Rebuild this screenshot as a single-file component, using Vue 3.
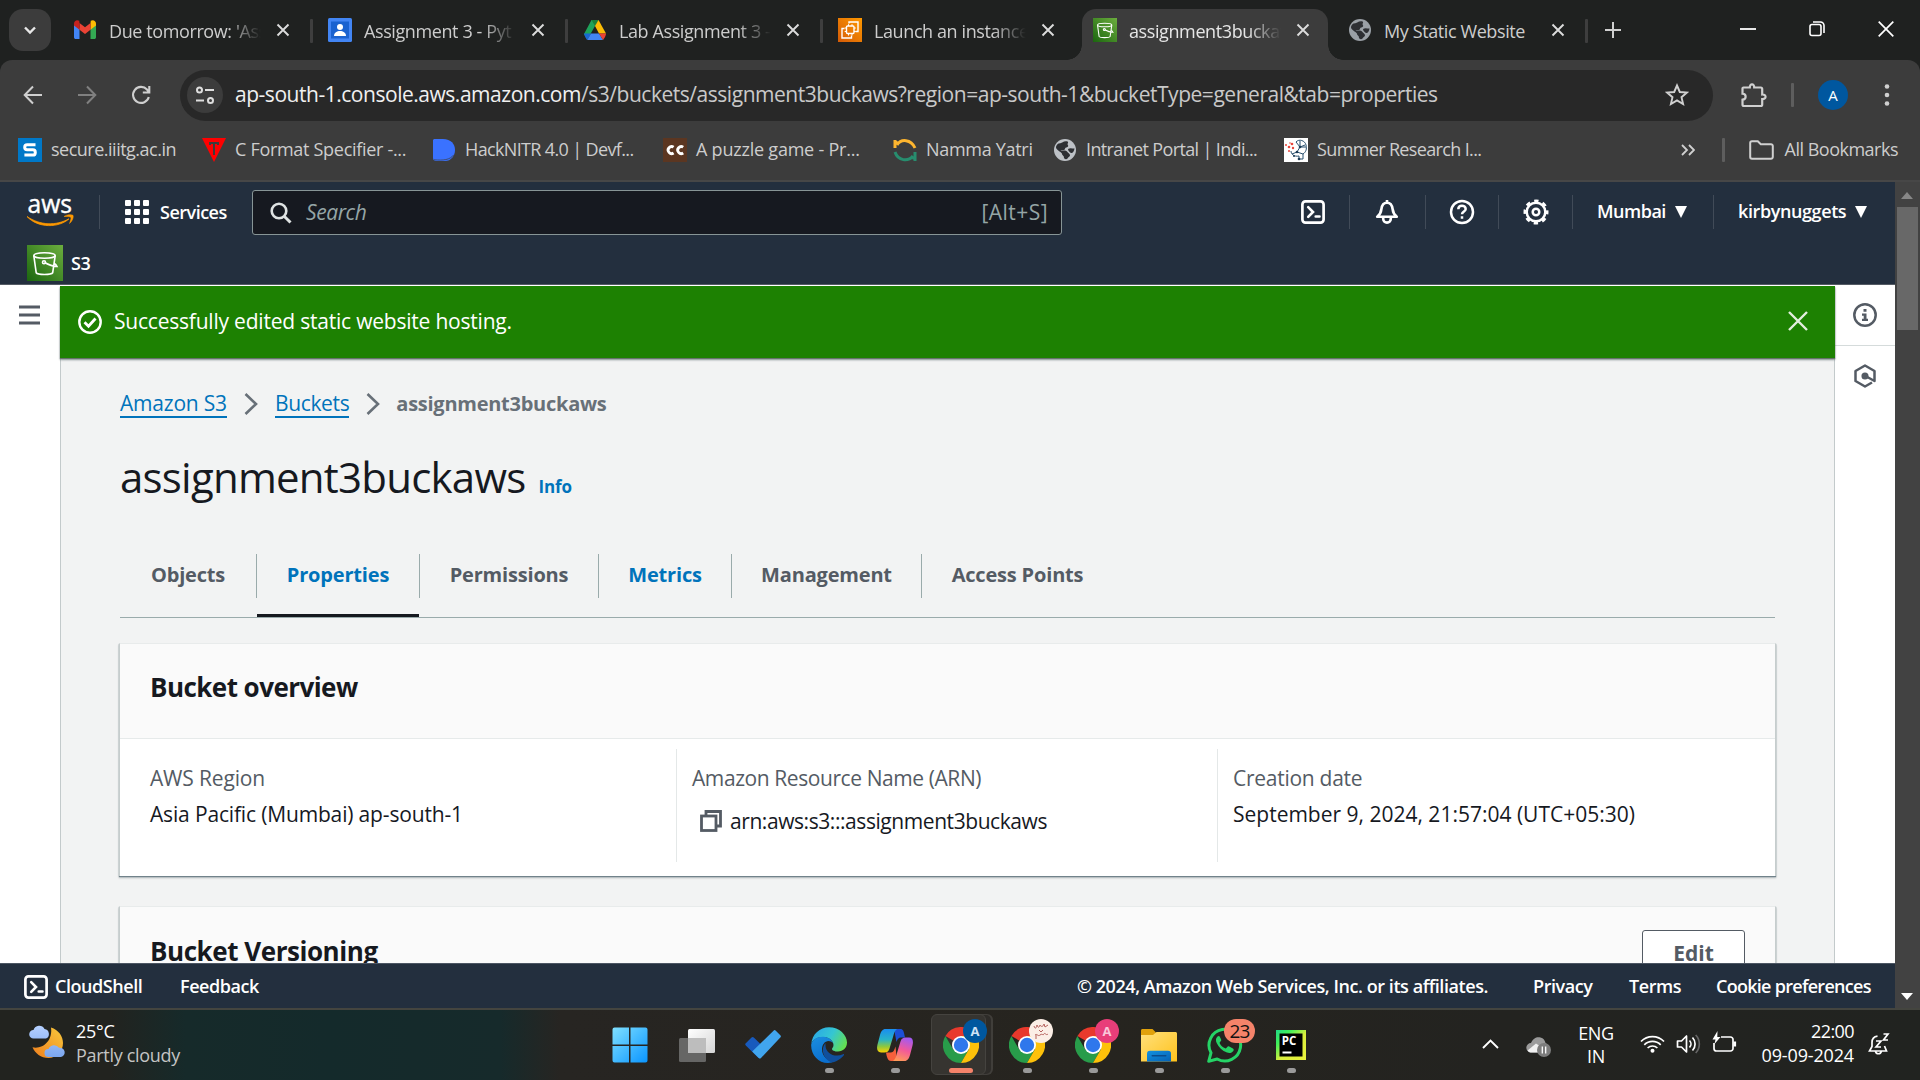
<script setup>
const tabs = [
  { icon: 'gmail', title: "Due tomorrow: 'Ass" },
  { icon: 'classroom', title: 'Assignment 3 - Pyt' },
  { icon: 'drive', title: 'Lab Assignment 3 -' },
  { icon: 'ec2', title: 'Launch an instance' },
  { icon: 's3', title: 'assignment3buckaw', active: true },
  { icon: 'globe', title: 'My Static Website', full: true },
]
const bookmarks = [
  { icon: 'secure', title: 'secure.iiitg.ac.in', width: 184 },
  { icon: 'format', title: 'C Format Specifier -...', width: 230, cls: 'mid' },
  { icon: 'hack', title: 'HackNITR 4.0 | Devf...', width: 231, cls: 'tight' },
  { icon: 'cc', title: 'A puzzle game - Pr...', width: 230, cls: 'wide' },
  { icon: 'namma', title: 'Namma Yatri', width: 160, cls: 'mid' },
  { icon: 'globe', title: 'Intranet Portal | Indi...', width: 231, cls: 'tight' },
  { icon: 'brain', title: 'Summer Research I...', width: 220, cls: 'tight' },
]
const sections = [
  { name: 'Objects', width: 137 },
  { name: 'Properties', width: 163, link: true, active: true },
  { name: 'Permissions', width: 179 },
  { name: 'Metrics', width: 133, link: true },
  { name: 'Management', width: 190 },
  { name: 'Access Points', width: 191 },
]
const dockApps = [
  { icon: 'win' },
  { icon: 'view' },
  { icon: 'todo' },
  { icon: 'edge', open: true },
  { icon: 'copilot', open: true },
  { icon: 'chrome', badge: 'A', tone: 'blue', focused: true },
  { icon: 'chrome', tone: 'paper', open: true },
  { icon: 'chrome', badge: 'A', tone: 'pink', open: true },
  { icon: 'folder', open: true },
  { icon: 'whatsapp', badge: '23', tone: 'count', open: true },
  { icon: 'pycharm', open: true },
]
</script>

<template>
  <div class="screen">
    <svg class="defs" width="0" height="0">
      <defs>
        <linearGradient id="gOrange" x1="0" y1="1" x2="1" y2="0"><stop offset="0" stop-color="#d45b07" /><stop offset="1" stop-color="#ff9900" /></linearGradient>
        <linearGradient id="gGreen" x1="0" y1="1" x2="1" y2="0"><stop offset="0" stop-color="#1b660f" /><stop offset="1" stop-color="#6cae3e" /></linearGradient>
        <linearGradient id="gWin" x1="0" y1="0" x2="1" y2="1"><stop offset="0" stop-color="#7fe0ff" /><stop offset="1" stop-color="#0a95ff" /></linearGradient>
        <linearGradient id="gView" x1="0" y1="0" x2="1" y2="1"><stop offset="0" stop-color="#fff" /><stop offset="1" stop-color="#d5d5d5" /></linearGradient>
        <linearGradient id="gEdgeTop" x1="0" y1="0.3" x2="1" y2="0.7"><stop offset="0" stop-color="#2aa8e6" /><stop offset="0.5" stop-color="#35c6d2" /><stop offset="1" stop-color="#66e04a" /></linearGradient>
        <linearGradient id="gEdge" x1="0" y1="0" x2="0.4" y2="1"><stop offset="0" stop-color="#1b8fe0" /><stop offset="1" stop-color="#0b6fce" /></linearGradient>
        <linearGradient id="gCoA" x1="0" y1="0" x2="0" y2="1"><stop offset="0" stop-color="#1a8df0" /><stop offset="0.45" stop-color="#28b3c8" /><stop offset="0.75" stop-color="#8fc83c" /><stop offset="1" stop-color="#ffd000" /></linearGradient>
        <linearGradient id="gCoB" x1="0.6" y1="0" x2="0.3" y2="1"><stop offset="0" stop-color="#a45af0" /><stop offset="0.5" stop-color="#f2599a" /><stop offset="1" stop-color="#ff9a58" /></linearGradient>
        <linearGradient id="gFolder" x1="0" y1="0" x2="1" y2="1"><stop offset="0" stop-color="#ffe07c" /><stop offset="1" stop-color="#ffc21c" /></linearGradient>
        <linearGradient id="gBlue" x1="0" y1="0" x2="1" y2="1"><stop offset="0" stop-color="#1492e0" /><stop offset="1" stop-color="#0461b4" /></linearGradient>
        <linearGradient id="gPy" x1="0" y1="0" x2="1" y2="1"><stop offset="0" stop-color="#21d789" /><stop offset="0.25" stop-color="#3ff05a" /><stop offset="0.55" stop-color="#d9ee3c" /><stop offset="1" stop-color="#e9f23c" /></linearGradient>
        <linearGradient id="gMoon" x1="1" y1="0" x2="0" y2="1"><stop offset="0" stop-color="#f8c83c" /><stop offset="1" stop-color="#ee7e1e" /></linearGradient>
        <linearGradient id="gCloud" x1="0" y1="0" x2="0" y2="1"><stop offset="0" stop-color="#b5d0ff" /><stop offset="1" stop-color="#7ba6ee" /></linearGradient>

        <symbol id="i-gmail" viewBox="0 0 24 24">
          <path d="M1 6v13.2c0 1 .8 1.800 1.800 1.800H6.500V10z" fill="#4285f4" /><path d="M17.500 21h3.700c1 0 1.800-.8 1.800-1.800V6l-5.500 4z" fill="#34a853" />
          <path d="M17.500 5v6.800L23 7.600V5.400c0-2.700-3.100-4.200-5.200-2.600z" fill="#fbbc04" /><path d="M6.500 11.800V5l5.500 4.200L17.500 5v6.800L12 16z" fill="#ea4335" /><path d="M1 5.400v2.200l5.500 4.200V5L6.200 2.800C4 1.200 1 2.700 1 5.400z" fill="#c5221f" />
        </symbol>
        <symbol id="i-classroom" viewBox="0 0 24 24">
          <rect width="24" height="24" rx="1.500" fill="#4285f4" /><rect x="3" y="3.500" width="18" height="17" fill="#1a62d0" /><circle cx="12" cy="9" r="3" fill="#fff" /><path d="M6 18c0-3.500 3-5 6-5s6 1.500 6 5z" fill="#fff" />
        </symbol>
        <symbol id="i-drive" viewBox="0 0 24 24">
          <path d="M8.500 2h7L12 8 5.500 19.500 3.500 20.500 1 16z" fill="#1ea35a" /><path d="M8.500 2h7L12 8z" fill="#188038" /><path d="M15.500 2 23 15.500h-7L12 8z" fill="#fbbc04" />
          <path d="M1 15.500h7l-3.800 6.500C3.500 21.500 1 17 1 15.500z" fill="#1967d2" /><path d="M8 15.500h8l4 6.500H4.200z" fill="#4285f4" /><path d="M16 15.500h7c0 2-2 5.500-3 6.500z" fill="#ea4335" />
        </symbol>
        <symbol id="i-ec2" viewBox="0 0 24 24">
          <rect width="24" height="24" fill="url(#gOrange)" /><g fill="none" stroke="#fff" stroke-width="1.400"><path d="M11 5.500V4h9v9.500h-2.500M6.500 10.500H4V20h9.500v-2.500" /><rect x="8.500" y="8" width="7.500" height="7.500" rx="1" /><path d="M10.500 6.200V8M14 6.200V8M10.500 15.500v2M14 15.500v2M6.700 10h1.800M6.700 13.500h1.800M16 10h1.800M16 13.500h1.800" stroke-width="1" /></g>
        </symbol>
        <symbol id="i-s3" viewBox="0 0 36 36">
          <rect width="36" height="36" fill="url(#gGreen)" /><g fill="none" stroke="#fff" stroke-width="1.600"><ellipse cx="17.500" cy="10.500" rx="10.700" ry="2.700" /><path d="M6.800 10.700l2.400 17c1.500 2.300 15 2.300 16.500 0l2.500-17M17.500 17.500c4 2.200 8 3.800 12.500 4-.6-1.500-1.500-2.500-3-3.300" /><circle cx="17" cy="17.300" r="1.500" /></g>
        </symbol>
        <symbol id="i-globe" viewBox="0 0 24 24">
          <circle cx="12" cy="12" r="11" fill="currentColor" /><path d="M5.500 5.500c3 0 6-3.500 9-2 1.500.8-.5 2.300.3 3.400 1.200 1.300-.5 2.300-1.800 2.700-1.500.4-.5 2.200-2 2.400H7.500c2 1.200 5-.5 6.500 1.500 1.200 1.500 2.500 2 3 3.500.3 1.500-1.800 2-2.500 3.400-1 1.600-4 .6-3.600-1.400.2-1.400-2-1.500-2-3.500C7.500 13.500 3.500 12 3 9.500c0-1.600 1-3.100 2.500-4z" fill="#2d2f33" />
          <path d="M15 11c2-1.500 4-.5 6.500-.5-.3 3-2 5-3.500 4.500-1.500-.6-3-2.500-3-4z" fill="#2d2f33" />
        </symbol>
        <symbol id="i-secure" viewBox="0 0 24 24"><rect width="24" height="24" fill="#0078c8" /><path d="M17.500 6.800H9.200C7.500 6.800 6.700 8 6.700 9.300s.8 2.500 2.500 2.500h5.600c1.700 0 2.500 1.200 2.500 2.600s-.8 2.700-2.500 2.700H6.400" fill="none" stroke="#fff" stroke-width="3" /></symbol>
        <symbol id="i-format" viewBox="0 0 24 24"><path d="M0 0h24L12 24z" fill="#f00" /><path d="M7 5h10M12 5v12M8 5v2M16 5v2" stroke="#3c3c3c" stroke-width="2" fill="none" /></symbol>
        <symbol id="i-hack" viewBox="0 0 24 24"><path d="M2 1h9c8 0 12 5 12 11s-4 11-10 11H4c-1.500 0-3-1-3-3V2z" fill="#3a72ff" /><path d="M2 21.800c9 .8 16 .2 19.800-5" fill="none" stroke="#3c3c3c" stroke-width=".7" /></symbol>
        <symbol id="i-cc" viewBox="0 0 24 24"><rect width="24" height="24" fill="#5b3621" /><path d="M10.600 9.200A3.500 3.500 0 1 0 10.600 15M20.200 9.200a3.500 3.500 0 1 0 0 5.800" fill="none" stroke="#fff" stroke-width="2.800" /></symbol>
        <symbol id="i-namma" viewBox="0 0 24 24"><path d="M2 10V2M1.500 4.500h3M4 7c4-6.500 14-6 18 3" fill="none" stroke="#fdb52f" stroke-width="3" /><path d="M2 14c3 9 13 10 18 4M22 14v9M19.500 20h3" fill="none" stroke="#278d6e" stroke-width="3" /></symbol>
        <symbol id="i-brain" viewBox="0 0 24 24"><rect width="24" height="24" fill="#fff" /><path d="M12 4c3-3.500 9-1.500 10 3 1 4 0 7-3 9v5h-4v-3c-5 1-8-2-8-5M12 4l4 5 5-2M16 9l-3 5 6 2M13 14l-5 2M16 3v6h6" fill="none" stroke="#29506e" stroke-width="1" /><g fill="#e8463c"><circle cx="2" cy="7" r="1" /><circle cx="5" cy="9" r="1.300" /><circle cx="8" cy="6" r="1.300" /><circle cx="9" cy="10" r="1.200" /><circle cx="5" cy="13" r="1" /><circle cx="6" cy="5" r=".8" /></g><g fill="#1b3a55"><circle cx="16" cy="9" r="1.300" /><circle cx="13" cy="14" r="1.300" /><circle cx="15" cy="21" r="1.300" /><circle cx="10" cy="18" r="1" /></g></symbol>

        <symbol id="i-shell" viewBox="0 0 24 24"><rect x="1.400" y="1.400" width="21.200" height="21.200" rx="3" fill="none" stroke="#fff" stroke-width="2.700" /><path d="M7.200 7.200 12 12l-4.800 4.800M14.700 16.500h3.800" fill="none" stroke="#fff" stroke-width="2.600" stroke-linecap="round" /></symbol>

        <symbol id="i-win" viewBox="0 0 36 36"><path d="M2.500.5H17v17H.5v-15a2 2 0 0 1 2-2zM18.500.5h15a2 2 0 0 1 2 2v15h-17zM.5 19H17v16.500H2.500a2 2 0 0 1-2-2zM18.500 19h17v14.500a2 2 0 0 1-2 2h-15z" fill="url(#gWin)" /></symbol>
        <symbol id="i-view" viewBox="0 0 36 36"><rect x="9" y="2" width="27" height="24" rx="1.500" fill="url(#gView)" /><rect x="0" y="11" width="27" height="24" rx="1.500" fill="#777" opacity=".8" /><rect x="9" y="11" width="18" height="15" fill="#bdbdbd" /></symbol>
        <symbol id="i-todo" viewBox="0 0 36 36"><path d="M.8 16.200 6.500 10.500c.8-.8 1.500-.8 2.300 0L20 21.500l-6.500 9.500L.8 18.400c-.8-.8-.8-1.400 0-2.200z" fill="#185abd" /><path d="M7.200 24.500 28.500 3.700c.8-.8 1.500-.8 2.300 0l4.500 4.600c.8.800.8 1.500 0 2.300L16 31c-.8.800-1.500.8-2.300 0z" fill="#41a5ee" /></symbol>
        <symbol id="i-edge" viewBox="0 0 36 36"><path d="M.3 17C1 7 9 .2 18 .2 28.500.2 36 8 36 15.500c0 5.500-4 9-9 9-3.500 0-6-1.300-6-2.600 0-1 1.500-1.700 1.500-4 0-4-4.500-8-10-8C6 10 1.500 12.500.3 17z" fill="url(#gEdgeTop)" /><path d="M.2 17.500C1.500 12.500 6 9.500 12.500 9.800c5 .4 8.500 3 9.500 6.200-1-1.200-2.500-2-4.500-2-3.500 0-6.500 3.500-6.500 8.500 0 6.500 5.500 11.500 12 11.500-1.500 1.200-3.500 2-6 2C7 36-.3 27.500.2 17.500z" fill="url(#gEdge)" /><path d="M14.500 16c-5 5-3 16 6 19.500 4.500-.5 9.500-3.500 12.500-7.500.3-.6-.3-1.200-1-.8-8 4-17.500-1-17.500-9z" fill="#104f9c" /></symbol>
        <symbol id="i-copilot" viewBox="0 0 36 36"><path d="M17 2h6c3 0 3.500 2 4 4l1 4.500h-4c-2.500 0-3.500 1.500-4.500 4.500z" fill="#1c4fd6" /><path d="M9 25.500h5c2.500 0 3.500-3 4.500-6L20 34h-6c-3 0-4-3-5-8.500z" fill="#f5603c" /><path d="M8.500 2H20c-2.500 1.500-3 4.500-4 8l-3.500 11.500c-1 3-2.500 4-5 4H4c-4 0-4.500-4-3.500-8L3 8c1-3.500 2.500-6 5.500-6z" fill="url(#gCoA)" /><path d="M27.500 34H16c2.500-1.500 3-4.500 4-8l3.500-11.500c1-3 2.500-4 5-4H32c4 0 4.500 4 3.500 8L33 28c-1 3.500-2.500 6-5.500 6z" fill="url(#gCoB)" /></symbol>
        <symbol id="i-chrome" viewBox="0 0 36 36"><path d="M18 18 2.400 9A18 18 0 0 1 33.600 9H18z" fill="#e8392c" /><path d="M2.400 9A18 18 0 0 0 18 36l7.800-13.500L10.200 22.500z" fill="#289c4a" /><path d="M33.600 9H18l7.800 13.500L18 36A18 18 0 0 0 33.600 9z" fill="#fdc10a" /><circle cx="18" cy="18" r="9" fill="#fff" /><circle cx="18" cy="18" r="7.200" fill="#2f77ec" /></symbol>
        <symbol id="i-folder" viewBox="0 0 36 36"><path d="M0 3.500C0 2.500.7 2 1.500 2h10l3.500 3.500V10H0z" fill="#e0a10c" /><path d="M0 8h12l3.500-3H34.500c.8 0 1.500.6 1.500 1.500v28H0z" fill="url(#gFolder)" /><path d="M6 34.500v-8c0-2 1.500-2.700 3-2.700h18c2 0 3 .9 3 2.700v8z" fill="url(#gBlue)" /><rect x="10.500" y="28" width="15" height="1.600" rx=".8" fill="#0a4c8c" /></symbol>
        <symbol id="i-whatsapp" viewBox="0 0 36 36"><path d="M1.700 34.300 4 25.800A15.800 15.800 0 1 1 10.200 32z" fill="#24231f" stroke="#25d366" stroke-width="3" stroke-linejoin="round" /><path d="M12.700 9.500c-.6-.8-1.500-.7-2.400.2-1.500 1.600-1.800 3.800-.6 6.300 2 4.200 5.500 7.800 10.300 9.500 2.800 1 5 .2 6.300-1.600.7-1 .5-2-.4-2.500l-3.700-1.900c-.8-.4-1.500-.1-2 .6-.8 1.200-1.400 1.700-2.600 1-2-1-3.700-2.700-4.800-4.700-.4-.8.200-1.500.9-2.200.6-.6.700-1.200.4-1.800z" fill="#25d366" /></symbol>
        <symbol id="i-pycharm" viewBox="0 0 36 36"><rect x="3" y="3" width="30" height="30" fill="url(#gPy)" /><rect x="6.500" y="6.500" width="23" height="23" fill="#000" /><rect x="9.500" y="24.500" width="9" height="2" fill="#fff" /><text x="8.800" y="18.300" fill="#fff" font-size="11.500" font-weight="700" font-family="Open Sans, sans-serif">PC</text></symbol>
      </defs>
    </svg>

    <header class="tabstrip">
      <button class="tab-search"><svg width="16" height="16" viewBox="0 0 16 16"><path d="M3 5.500 8 10.500 13 5.500" fill="none" stroke="#e8e8e8" stroke-width="2.400" /></svg></button>
      <div v-for="(t, i) in tabs" :key="i" class="tab" :class="{ active: t.active, ruled: i !== 3 && i !== 4 }">
        <svg class="fav" width="24" height="24"><use :href="'#i-' + t.icon" /></svg>
        <span class="tab-title" :class="{ faded: !t.full }">{{ t.title }}</span>
        <svg class="x" width="14" height="14" viewBox="0 0 14 14"><path d="M1.500 1.500l11 11M12.500 1.500l-11 11" stroke="#dcdcdc" stroke-width="1.900" /></svg>
      </div>
      <svg class="plus" width="16" height="16" viewBox="0 0 16 16"><path d="M8 0v16M0 8h16" stroke="#d0d0d0" stroke-width="2" /></svg>
      <div class="win-ctl">
        <svg width="16" height="16" viewBox="0 0 16 16"><path d="M0 8h16" stroke="#fff" stroke-width="1.800" /></svg>
        <svg width="16" height="16" viewBox="0 0 16 16"><rect x="1" y="3.500" width="11" height="11" rx="2" fill="none" stroke="#fff" stroke-width="1.600" /><path d="M4 1h7.500A3.500 3.500 0 0 1 15 4.500V12" fill="none" stroke="#fff" stroke-width="1.600" /></svg>
        <svg width="16" height="16" viewBox="0 0 16 16"><path d="M.7.7l14.600 14.600M15.300.7.7 15.300" stroke="#fff" stroke-width="1.700" /></svg>
      </div>
    </header>

    <div class="chrome-bars">
      <div class="toolbar">
        <svg class="nav" width="20" height="20" viewBox="0 0 20 20"><path d="M19 10H2M10 1.500 1.700 10l8.300 8.500" fill="none" stroke="#cfcfcf" stroke-width="2" /></svg>
        <svg class="nav" width="20" height="20" viewBox="0 0 20 20"><path d="M1 10h17M10 1.500l8.300 8.500-8.300 8.500" fill="none" stroke="#808080" stroke-width="2" /></svg>
        <svg class="nav" width="20" height="20" viewBox="0 0 20 20"><path d="M17.800 12A8 8 0 1 1 16 4.500L18 7M18.300 1v6.500h-6.500" fill="none" stroke="#cfcfcf" stroke-width="2.100" /></svg>
        <div class="omnibox">
          <span class="site"><svg width="20" height="20" viewBox="0 0 20 20"><g fill="none" stroke="#dedede" stroke-width="2"><circle cx="4.500" cy="5" r="2.500" /><path d="M10 5h9M1 15.500h8" /><circle cx="15.500" cy="15.500" r="2.500" /></g></svg></span>
          <span class="url"><b>ap-south-1.console.aws.amazon.com</b>/s3/buckets/assignment3buckaws?region=ap-south-1&amp;bucketType=general&amp;tab=properties</span>
          <svg class="star" width="24" height="24" viewBox="0 0 24 24"><path d="M12 2.500 14.800 9l7 .6-5.300 4.600 1.600 6.900L12 17.400l-6.100 3.700 1.600-6.900L2.200 9.600l7-.6z" fill="none" stroke="#d0d0d0" stroke-width="1.900" /></svg>
        </div>
        <svg class="ext" width="26" height="26" viewBox="0 0 26 26"><path d="M2.500 5.500h6.300c-.2-4.300 4.600-4.300 4.400 0h6.500a1.500 1.500 0 0 1 1.500 1.500v5.500c4.500-.3 4.500 4.900 0 4.600v5.400a1.500 1.500 0 0 1-1.500 1.500H3a1.500 1.500 0 0 1-1.500-1.500v-4.800c4.200-.5 4.200-5.500 0-6V6.500a1 1 0 0 1 1-1z" fill="none" stroke="#d0d0d0" stroke-width="2.200" /></svg>
        <i class="tb-rule"></i>
        <span class="avatar">A</span>
        <svg class="dots" width="6" height="26" viewBox="0 0 6 26" fill="#d0d0d0"><circle cx="3" cy="4.500" r="2.300" /><circle cx="3" cy="13" r="2.300" /><circle cx="3" cy="21.500" r="2.300" /></svg>
      </div>
      <div class="bookmarks">
        <div v-for="b in bookmarks" :key="b.title" class="bm" :class="b.cls" :style="{ width: b.width + 'px' }">
          <svg width="24" height="24"><use :href="'#i-' + b.icon" /></svg><span>{{ b.title }}</span>
        </div>
        <div class="bm-end">
          <svg width="14" height="12" viewBox="0 0 14 12"><path d="M1 1l5 5-5 5M8 1l5 5-5 5" fill="none" stroke="#d0d0d0" stroke-width="1.800" /></svg>
          <i class="tb-rule"></i>
          <svg width="25" height="20" viewBox="0 0 25 20"><path d="M1.200 3A1.800 1.800 0 0 1 3 1.200h5.800l3 3H22A1.800 1.800 0 0 1 23.800 6v11a1.800 1.800 0 0 1-1.800 1.800H3A1.800 1.800 0 0 1 1.200 17z" fill="none" stroke="#d0d0d0" stroke-width="2" /></svg>
          <span>All Bookmarks</span>
        </div>
      </div>
    </div>

    <div class="viewport">
      <div class="page">
        <div class="aws-head">
          <div class="aws-row">
            <svg class="logo" width="48" height="32" viewBox="0 0 48 32"><text x="0.500" y="17" fill="#fff" font-family="Open Sans, sans-serif" font-size="25" textLength="44.500" lengthAdjust="spacingAndGlyphs" stroke="#fff" stroke-width=".4">aws</text><path d="M0 20.500c13 9 29 9.500 42 2.300-10 9.200-31 9.700-42-2.300z" fill="#f90" stroke="#f90" stroke-width=".8" /><path d="M37 20.500c3-2.200 7.500-2.200 9-1.200.8 1.700-.5 6-3.500 8.200 1-2.500 1.800-5 1.300-6.200-1.300-.8-4-.8-6.800-.8z" fill="#f90" stroke="#f90" stroke-width=".5" /></svg>
            <i class="h-rule first"></i>
            <svg class="grid" width="24" height="24" viewBox="0 0 24 24" fill="#fff"><template v-for="r in 3" :key="r"><rect v-for="c in 3" :key="c" :x="(c - 1) * 9" :y="(r - 1) * 9" width="6" height="6" rx="1" /></template></svg>
            <span class="h-label">Services</span>
            <div class="search">
              <svg width="22" height="22" viewBox="0 0 22 22"><circle cx="9" cy="9" r="7.300" fill="none" stroke="#dfe3e3" stroke-width="2.600" /><path d="M14.200 14.200 20.500 20.500" stroke="#dfe3e3" stroke-width="3" /></svg>
              <em>Search</em><span>[Alt+S]</span>
            </div>
            <div class="h-right">
              <div class="cell c1"><svg width="24" height="24"><use href="#i-shell" /></svg></div>
              <div class="cell c2"><svg width="24" height="24" viewBox="0 0 24 24" fill="none" stroke="#fff" stroke-width="2.600"><path d="M12 0v2.500M2.200 16.700h19.600c-2.600-2-3.800-3.800-4.200-7.700-.5-4-2.300-6.300-5.600-6.300S6.900 5 6.400 9c-.4 3.900-1.600 5.700-4.200 7.700z" stroke-linejoin="round" /><path d="M8.200 17.500v1.300a3.800 3.800 0 0 0 7.600 0v-1.300" /></svg></div>
              <div class="cell c3"><svg width="26" height="26" viewBox="0 0 26 26" fill="none" stroke="#fff" stroke-width="2.500"><circle cx="13" cy="13" r="11" /><path d="M9.300 10.300c0-4.800 7.400-4.500 7.400-.3 0 2.500-3.700 2.500-3.700 5.300M13 17.300v2.500" /></svg></div>
              <div class="cell c4"><svg width="26" height="26" viewBox="0 0 26 26" fill="none" stroke="#fff"><circle cx="13" cy="13" r="9.300" stroke-width="2.500" /><circle cx="13" cy="13" r="11.200" stroke-width="2.600" stroke-dasharray="4.400 4.400" stroke-dashoffset="2.200" /><circle cx="13" cy="13" r="3.300" stroke-width="2.500" /></svg></div>
              <div class="cell c5 h-label">Mumbai <i class="caret"></i></div>
              <div class="cell c6 h-label">kirbynuggets <i class="caret"></i></div>
            </div>
          </div>
          <div class="fav-row"><svg width="36" height="36"><use href="#i-s3" /></svg><span class="h-label">S3</span></div>
        </div>

        <div class="body">
          <aside class="rail"><svg width="21" height="20" viewBox="0 0 21 20"><path d="M0 2h21M0 10h21M0 18h21" stroke="#545b64" stroke-width="2.800" /></svg></aside>
          <main class="main">
            <div class="flash">
              <svg width="24" height="24" viewBox="0 0 24 24" fill="none" stroke="#fff" stroke-width="2.400"><circle cx="12" cy="12" r="10.700" /><path d="M6.500 12.300l4 4 7-7.800" stroke-width="2.800" /></svg>
              <span>Successfully edited static website hosting.</span>
              <svg class="flash-x" width="20" height="20" viewBox="0 0 20 20"><path d="M1 1l18 18M19 1 1 19" stroke="#e3eedf" stroke-width="2.400" /></svg>
            </div>
            <div class="content">
              <nav class="crumbs">
                <a class="c-s3">Amazon S3</a><svg width="14" height="22" viewBox="0 0 14 22"><path d="M1.500 1l10.500 10L1.500 21" fill="none" stroke="#687078" stroke-width="2.600" /></svg>
                <a class="c-bk">Buckets</a><svg width="14" height="22" viewBox="0 0 14 22"><path d="M1.500 1l10.500 10L1.500 21" fill="none" stroke="#687078" stroke-width="2.600" /></svg>
                <strong>assignment3buckaws</strong>
              </nav>
              <div class="title"><h1>assignment3buckaws</h1><a>Info</a></div>
              <div class="sections">
                <div v-for="s in sections" :key="s.name" class="sec" :class="{ link: s.link, active: s.active }" :style="{ width: s.width + 'px' }"><span>{{ s.name }}</span></div>
              </div>
              <section class="card">
                <div class="card-head"><h2>Bucket overview</h2></div>
                <div class="cols">
                  <div class="col"><label>AWS Region</label><p>Asia Pacific (Mumbai) ap-south-1</p></div>
                  <div class="col"><label class="tighter">Amazon Resource Name (ARN)</label><p class="arn"><svg width="22" height="22" viewBox="0 0 22 22" fill="none" stroke="#545b64" stroke-width="2.800"><path d="M6 5V1.500h14.500V16H17" /><rect x="1.500" y="6" width="14.500" height="14.500" /></svg><span>arn:aws:s3:::assignment3buckaws</span></p></div>
                  <div class="col last"><label>Creation date</label><p class="date">September 9, 2024, 21:57:04 (UTC+05:30)</p></div>
                </div>
              </section>
              <section class="card second">
                <div class="card-head"><h2>Bucket Versioning</h2><button class="edit">Edit</button></div>
              </section>
            </div>
          </main>
          <aside class="tools">
            <div class="tool ruled-b"><svg width="24" height="24" viewBox="0 0 24 24"><circle cx="12" cy="12" r="10.700" fill="none" stroke="#545b64" stroke-width="2.500" /><path d="M10.500 6h3v2.700h-3zM9 10.500h4.500v5.300H15V18H9v-2.200h1.700v-3H9z" fill="#545b64" /></svg></div>
            <div class="tool"><svg width="24" height="24" viewBox="0 0 24 24" fill="none" stroke="#545b64" stroke-width="2.500"><path d="M19 18.500 12 22.500 2.500 17V7L12 1.500 21.500 7v10l-9-5" stroke-linejoin="round" /><circle cx="12" cy="12" r="2.300" fill="#545b64" /></svg></div>
          </aside>
        </div>

        <footer class="foot">
          <svg width="24" height="24"><use href="#i-shell" /></svg>
          <span class="f1">CloudShell</span><span class="f2">Feedback</span>
          <span class="f3">© 2024, Amazon Web Services, Inc. or its affiliates.</span>
          <span class="f4">Privacy</span><span class="f5">Terms</span><span class="f6">Cookie preferences</span>
        </footer>
      </div>
      <div class="scroll"><i class="up"></i><i class="thumb"></i><i class="down"></i></div>
    </div>

    <div class="taskbar">
      <div class="weather">
        <svg width="37" height="34" viewBox="0 0 37 34"><path d="M22 2.500c7.500 2.500 12 8.500 12 15.500 0 8.500-6.500 15-14.500 15C12 33 6 28.500 3.500 22.300 13.500 24.500 24 16 22 2.500z" fill="url(#gMoon)" /><path d="M4.500 13.500a4.300 4.300 0 0 1 0-8.600A6 6 0 0 1 15.500 4a5 5 0 0 1 1.500 9.500zM19.500 32a4 4 0 0 1 0-8 6 6 0 0 1 10.500-1.200A4.700 4.700 0 0 1 32 32z" fill="url(#gCloud)" /></svg>
        <div><span>25°C</span><span class="dim">Partly cloudy</span></div>
      </div>
      <div class="dock">
        <div v-for="(a, i) in dockApps" :key="i" class="app" :class="{ open: a.open, focused: a.focused }">
          <svg width="36" height="36"><use :href="'#i-' + a.icon" /></svg>
          <span v-if="a.tone === 'paper'" class="badge paper"><svg width="24" height="24" viewBox="0 0 24 24" fill="none" stroke="#b5605c" stroke-width="1"><path d="M5 7c1 3 2 3 3-1 1 3 2 3 3 0 1 2 3 2 4-1l1 3 3-2M10 11l2 2 2-2M6 16c2-2 3 2 5 0s3 1 4-1 2 2 4 0M7 16v4" /></svg></span>
          <span v-else-if="a.badge" class="badge" :class="a.tone">{{ a.badge }}</span>
        </div>
      </div>
      <div class="tray">
        <svg class="t-up" width="17" height="10" viewBox="0 0 17 10"><path d="M1 9l7.500-7.500L16 9" fill="none" stroke="#fff" stroke-width="1.900" /></svg>
        <svg class="t-cloud" width="26" height="22" viewBox="0 0 26 22"><path d="M5 16.500a4.700 4.700 0 0 1 0-9.400C7 2 11 .5 14.500 1.500c3 .8 4.500 3 5 5.500 2 1 2.500 3 2.500 5l-3 4.500z" fill="#9b9b9b" /><path d="M1.500 14.500 10 7.500l9 6v3H5c-1.500 0-2.500-.5-3.500-2z" fill="#f0f0f0" /><circle cx="18" cy="14" r="7" fill="#7d7d7d" /><path d="M16.300 10.500v7M19.700 10.500v7" stroke="#fff" stroke-width="1.300" /></svg>
        <div class="lang"><span>ENG</span><span>IN</span></div>
        <svg class="t-wifi" width="25" height="18" viewBox="0 0 25 18" fill="none" stroke="#fff" stroke-width="1.700"><path d="M1 6.500a16 16 0 0 1 23 0M4.300 9.800a11.500 11.500 0 0 1 16.400 0M7.600 13a7 7 0 0 1 9.800 0" /><circle cx="12.500" cy="15.700" r="2" fill="#fff" stroke="none" /></svg>
        <svg class="t-vol" width="25" height="20" viewBox="0 0 25 20" fill="none" stroke="#fff" stroke-width="1.700"><path d="M1.500 7h4L10.500 2v16l-5-5h-4z" stroke-linejoin="round" /><path d="M13.500 6.500a5 5 0 0 1 0 7M16.500 3.500a9.500 9.500 0 0 1 0 13" /><path d="M19.700 1a13 13 0 0 1 0 18" stroke="#666" /></svg>
        <svg class="t-bat" width="25" height="22" viewBox="0 0 25 22" fill="none" stroke="#fff" stroke-width="1.700"><path d="M9 5h9.500A2.500 2.500 0 0 1 21 7.500v9a2.500 2.500 0 0 1-2.500 2.500h-14A2.500 2.500 0 0 1 2 16.500V11" /><path d="M22.700 9.500v5" stroke-width="2.800" /><path d="M5.500-1 .5 7.500h3L2.500 12 8.500 5H5.300z" fill="#fff" stroke="none" /></svg>
        <div class="clock"><span class="hm">22:00</span><span>09-09-2024</span></div>
        <svg class="t-bell" width="22" height="24" viewBox="0 0 22 24" fill="none" stroke="#fff" stroke-width="1.700"><path d="M9.500 4.200C6 4.700 4 7.500 4 10.500v4L1.500 19h17L16.500 14M7.500 19.500a3 3 0 0 0 5.800 0M8 9h5l-5 6h5M15.500 2h4.500l-4.500 6H20" /></svg>
      </div>
    </div>
  </div>
</template>

<style>
body { background: #1f2120; overflow: hidden; }
</style>

<style scoped>
* { box-sizing: border-box; }
.screen { width: 1920px; height: 1080px; display: flex; flex-direction: column; overflow: hidden; font-family: "Open Sans", "Noto Sans", sans-serif; font-size: 18px; white-space: nowrap; color: #fff; background: #1f2120; }
svg { display: block; flex: none; }
.defs { position: absolute; }
button, h1, h2, p { margin: 0; font-family: inherit; }

.tabstrip { height: 60px; display: flex; flex: none; background: #1f2120; }
.tab-search { width: 42px; height: 42px; margin: 9px 6px 0 9px; border: 0; border-radius: 14px; background: #3c3c3c; display: flex; align-items: center; justify-content: center; padding: 0; }
.tab { width: 255px; height: 60px; display: flex; align-items: center; position: relative; padding-left: 16px; color: #cdcdcd; letter-spacing: -.4px; z-index: 1; }
.tab > .fav { color: #9aa0a6; }
.tab-title { width: 152px; margin: 2px 0 0 12px; overflow: hidden; }
.tab-title.faded { -webkit-mask-image: linear-gradient(90deg, #000 78%, transparent 100%); mask-image: linear-gradient(90deg, #000 78%, transparent 100%); }
.tab .x { margin-left: 15px; }
.tab.ruled::after { content: ""; position: absolute; right: -1px; top: 19px; width: 3px; height: 24px; background: #3e3e3e; border-radius: 1px; }
.tab.active { color: #e6e6e6; z-index: 0; }
.tab.active::before { content: ""; position: absolute; z-index: -1; left: 5px; right: 4px; top: 9px; bottom: 0; background: #3c3c3c; border-radius: 14px 14px 0 0; }
.tab.active::after { content: ""; position: absolute; z-index: -1; left: -10px; right: -11px; bottom: 0; height: 15px; background: radial-gradient(circle at 0 0, transparent 14.5px, #3c3c3c 15px) 0 0 / 15px 15px no-repeat, radial-gradient(circle at 100% 0, transparent 14.5px, #3c3c3c 15px) 100% 0 / 15px 15px no-repeat; }
.plus { margin: 22px 0 0 18px; }
.win-ctl { margin: 21px 26px 0 auto; display: flex; gap: 53px; }

.chrome-bars { height: 122px; flex: none; background: #3c3c3c; border-radius: 12px 12px 0 0; border-bottom: 2px solid #474747; }
.toolbar { height: 69px; display: flex; align-items: center; padding-left: 23px; }
.nav { margin-right: 34px; }
.omnibox { width: 1533px; height: 51px; margin: 1px 0 0 -5px; border-radius: 26px; background: #282828; display: flex; align-items: center; padding-left: 7px; }
.site { width: 36px; height: 36px; border-radius: 50%; background: #3c3c3c; display: flex; align-items: center; justify-content: center; }
.url { margin: -2px 0 0 12px; font-size: 21px; letter-spacing: -.47px; color: #c9c9c9; }
.url b { font-weight: 400; color: #f0f0f0; }
.star { margin: 0 24px 0 auto; }
.ext { margin-left: 28px; }
.tb-rule { width: 3px; height: 24px; border-radius: 1px; background: #5e5e5e; }
.toolbar .tb-rule { margin-left: 24px; }
.avatar { width: 30px; height: 30px; margin-left: 24px; border-radius: 50%; background: #00579f; font-size: 15px; display: flex; align-items: center; justify-content: center; }
.dots { margin-left: 36px; }
.bookmarks { height: 51px; display: flex; align-items: center; padding: 0 22px 9px 18px; letter-spacing: -.5px; color: #cdcdcd; }
.bm { display: flex; align-items: center; gap: 9px; flex: none; color: #bdc1c6; }
.bm span { color: #cdcdcd; padding-bottom: 2px; }
.bm.wide { letter-spacing: -.22px; }
.bm.mid { letter-spacing: -.3px; }
.bm.tight { letter-spacing: -.64px; }
.bm-end { margin-left: auto; display: flex; align-items: center; }
.bm-end .tb-rule { margin: 0 24px 0 27px; }
.bm-end span { margin-left: 11px; padding-bottom: 2px; }

.viewport { height: 826px; flex: none; display: flex; }
.page { width: 1895px; display: flex; flex-direction: column; background: #fff; }
.aws-head { height: 103px; flex: none; background: #232f3e; border-bottom: 1px solid #545b64; margin-bottom: 1px; }
.aws-row { height: 60px; display: flex; align-items: center; }
.logo { margin-left: 27px; }
.h-rule.first { width: 1px; height: 34px; background: #414b58; margin: 0 25px 0 24px; }
.h-label { font-weight: 600; letter-spacing: -.5px; margin-top: -1px; }
.grid + .h-label { margin-left: 11px; width: 92px; }
.search { width: 810px; height: 45px; border: 1px solid #879596; border-radius: 3px; background: #161920; display: flex; align-items: center; padding: 0 13px 0 17px; margin-top: 1px; font-size: 21px; color: #95a5a6; }
.search em { margin: -2px 0 0 14px; letter-spacing: -.4px; }
.search span { margin: -2px 0 0 auto; letter-spacing: .45px; }
.h-right { margin-left: auto; display: flex; align-items: center; }
.cell { height: 34px; display: flex; align-items: center; justify-content: center; border-left: 1px solid #414b58; }
.c1 { width: 73px; border: 0; }
.c2 { width: 76px; padding-right: 1px; }
.c3 { width: 73px; }
.c4 { width: 74px; }
.cell.h-label { margin-top: 0; padding-bottom: 2px; justify-content: flex-start; padding-left: 24px; }
.c5 { width: 141px; }
.c6 { width: 182px; letter-spacing: -.4px; }
.caret { border: 6px solid transparent; border-top: 12px solid #fff; border-bottom: 0; margin: 2px 0 0 9px; }
.fav-row { display: flex; align-items: center; padding: 3px 0 0 27px; gap: 8px; }

.body { height: 677px; flex: none; display: flex; overflow: hidden; }
.rail { width: 60px; padding: 19px 0 0 19px; }
.main { width: 1775px; background: #f2f3f3; }
.flash { height: 72px; background: #1d8102; display: flex; align-items: center; padding: 0 27px 0 18px; font-size: 21px; letter-spacing: -.21px; position: relative; box-shadow: 0 1px 1px #66736b, 0 2px 2px rgba(0, 28, 36, .4); }
.flash span { margin: -3px 0 0 12px; }
.flash-x { margin: -2px 0 0 auto; }
.content { height: 605px; overflow: hidden; border: solid #c3cacb; border-width: 0 1px; padding: 0 59px; }
.crumbs { height: 90px; display: flex; align-items: center; font-size: 21px; letter-spacing: -.2px; color: #687078; }
.crumbs a { color: #0073bb; line-height: 26px; border-bottom: 2px solid #0073bb; margin-top: 2px; }
.crumbs svg { margin: 1px 0 0 17px; }
.crumbs .c-bk { margin-left: 17px; letter-spacing: -.35px; }
.crumbs strong { font-size: 20px; letter-spacing: -.26px; margin-left: 16px; }
.title { height: 56px; display: flex; align-items: baseline; }
.title h1 { font-size: 42px; font-weight: 400; line-height: 57px; letter-spacing: -.77px; color: #16191f; }
.title a { margin-left: 13px; font-size: 17px; font-weight: 700; letter-spacing: -.1px; color: #0073bb; }
.sections { height: 64px; margin-top: 50px; display: flex; border-bottom: 1px solid #9aabab; font-size: 20px; font-weight: 700; letter-spacing: -.18px; color: #545b64; }
.sec { height: 63px; position: relative; }
.sec span { display: flex; align-items: center; justify-content: center; height: 44px; padding-bottom: 4px; border-right: 1px solid #9aabab; }
.sec:last-child span { border: 0; }
.sec.link { color: #0073bb; }
.sec.active::after { content: ""; position: absolute; left: 0; right: 1px; bottom: 0; height: 3px; background: #16191f; }
.card { margin: 25px -1px 0; height: 233px; background: #fff; border: 1px solid #dfe4e4; border-top-color: #e8ebeb; border-left-color: #c6cdcd; border-right-color: #c6cdcd; border-bottom: 0; box-shadow: 0 1px 1px #71828a, 0 2px 2px rgba(0, 28, 36, .25); color: #16191f; }
.card.second { margin-top: 30px; }
.card-head { height: 95px; display: flex; align-items: center; justify-content: space-between; padding: 0 30px 9px; background: #fafafa; border-bottom: 1px solid #e6eaea; }
h2 { font-size: 26px; font-weight: 700; letter-spacing: -.55px; }
.second h2 { letter-spacing: -.45px; margin-top: 2px; }
.edit { width: 103px; height: 47px; border: 1px solid #545b64; border-radius: 3px; background: #fff; color: #545b64; font-size: 21px; font-weight: 700; padding: 0; margin-top: 7px; }
.cols { display: flex; padding-top: 10px; }
.col { height: 113px; width: 541px; padding: 15px 0 0 15px; border-left: 1px solid #e4e8e8; font-size: 21px; letter-spacing: -.16px; }
.col:first-child { width: 556px; padding-left: 30px; border: 0; }
.col label { display: block; line-height: 28px; color: #545b64; }
.col label.tighter { letter-spacing: -.42px; }
.col.last label { letter-spacing: -.27px; }
.col p { line-height: 28px; margin-top: 8px; }
.col .arn { display: flex; align-items: center; gap: 8px; padding-left: 8px; margin-top: 15px; letter-spacing: -.43px; }
.col .date { letter-spacing: 0; }
.tools { width: 60px; }
.tool { height: 60px; display: flex; justify-content: center; padding-top: 17px; }
.tool + .tool { padding-top: 18px; }
.tool.ruled-b { border-bottom: 1px solid #d5dbdb; }
.foot { height: 45px; flex: none; background: #232f3e; border-top: 1px solid #4c5663; display: flex; align-items: center; padding: 1px 24px 0; font-weight: 600; letter-spacing: -.44px; }
.foot span { margin-top: -2px; }
.foot .f1 { margin: -1px 0 0 7px; width: 125px; }
.foot .f3 { margin-left: auto; width: 456px; }
.f4 { width: 96px; }
.f5 { width: 87px; }
.f6 { width: 155px; letter-spacing: -.72px; }

.scroll { width: 25px; background: #424242; position: relative; padding: 25px 2px 0; }
.scroll i { display: block; }
.thumb { height: 123px; background: #686868; }
.up, .down { position: absolute; left: 6px; border: 6px solid transparent; }
.up { top: 4px; border-bottom: 7px solid #878787; }
.down { top: 811px; border-top: 7px solid #fff; border-bottom: 0; }

.taskbar { height: 72px; flex: none; border-top: 2px solid #44453f; display: grid; grid-template-columns: 595px 1fr auto; background: linear-gradient(90deg, #22231f 0, #22231f 110px, #162a2a 185px, #142a2b 330px, #162a2b 500px, #272522 560px, #26241f 1100px, #232320 1500px, #212320 1920px); }
.weather { display: flex; padding: 9px 0 0 29px; letter-spacing: -.3px; }
.weather svg { margin-top: 6px; }
.weather div { margin-left: 10px; display: flex; flex-direction: column; line-height: 24px; }
.weather .dim { color: #c4c4c4; }
.dock { display: flex; }
.app { width: 66px; height: 70px; display: flex; justify-content: center; padding-top: 17px; position: relative; }
.app:first-child { width: 69px; }
.app.open::after, .app.focused::after { content: ""; position: absolute; left: 28.5px; top: 58px; width: 9px; height: 5px; border-radius: 3px; background: #9a9a9a; }
.app.focused::after { left: 21px; width: 24px; background: #f5836a; }
.app.focused::before { content: ""; position: absolute; left: 3px; top: 4px; width: 53px; height: 59px; border-radius: 6px; background: #363430; border: 1px solid #45433f; box-shadow: 6px 0 0 -1px #2e2c29, 7px 0 0 0 #403e3a; }
.app > svg { position: relative; }
.badge { position: absolute; left: 35px; top: 9px; width: 24px; height: 24px; border-radius: 50%; font-size: 13px; font-weight: 700; color: #cfe2f5; display: flex; align-items: center; justify-content: center; }
.badge.blue { background: #00579f; }
.badge.pink { background: #e83e79; color: #f9c6d8; }
.badge.paper { background: #fbeee6; }
.badge.count { left: 32px; width: 31px; border-radius: 12px; background: #f5836a; color: #111; font-size: 19px; font-weight: 400; letter-spacing: -.8px; }
.tray { display: flex; padding-right: 30px; letter-spacing: -.3px; }
.t-up { margin: 29px 27px 0 0; }
.t-cloud { margin: 26px 25px 0 0; }
.lang { width: 38px; text-align: center; padding-top: 12px; }
.lang span, .clock span { display: block; line-height: 23px; }
.t-wifi { margin: 25px 0 0 25px; }
.t-vol { margin: 24px 0 0 11px; }
.t-bat { margin: 22px 0 0 11px; overflow: visible; }
.clock { width: 95px; margin-left: 22px; text-align: right; padding-top: 9px; letter-spacing: -.15px; }
.clock .hm { letter-spacing: -.6px; }
.clock span { line-height: 24px; }
.t-bell { margin: 22px 0 0 14px; }
</style>
